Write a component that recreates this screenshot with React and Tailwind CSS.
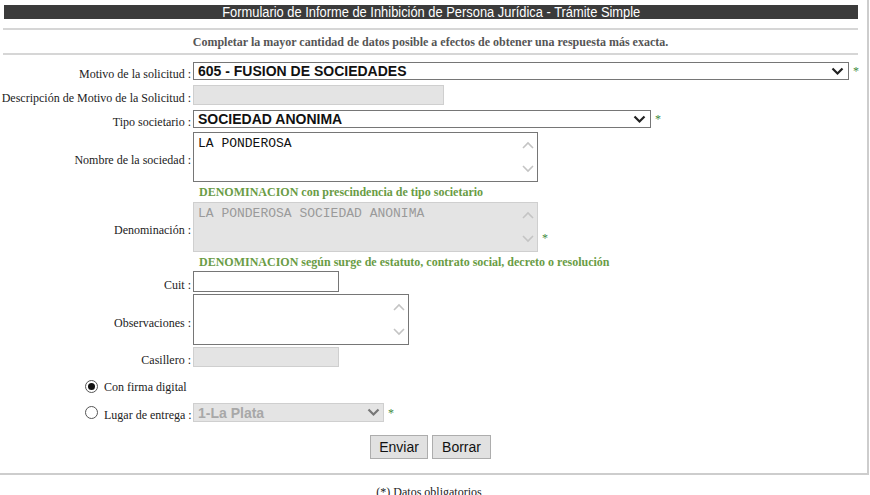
import React from "react";

const serif = "font-['Liberation_Serif','Times_New_Roman',serif]";
const sans = "font-['Liberation_Sans',Arial,sans-serif]";
const mono = "font-['Liberation_Mono','Courier_New',monospace]";

function Chevron({ color = "#222", w = 13 }) {
  return (
    <svg width={w} height="9" viewBox="0 0 13 9" className="shrink-0">
      <polyline points="1.5,1.5 6.5,6.5 11.5,1.5" fill="none" stroke={color} strokeWidth="2.2" />
    </svg>
  );
}

function Star() {
  return <span className={`${serif} text-[12px] text-[#3f8a3f] ml-[4px] leading-none`}>*</span>;
}

function ScrollArrows() {
  return (
    <div className="absolute right-[1px] top-[1px] bottom-[1px] w-[17px] flex flex-col justify-between items-center py-[7px]">
      <svg width="12" height="8" viewBox="0 0 12 8">
        <polyline points="1,7 6,2 11,7" fill="none" stroke="#c4c4c4" strokeWidth="1.6" />
      </svg>
      <svg width="12" height="8" viewBox="0 0 12 8">
        <polyline points="1,1 6,6 11,1" fill="none" stroke="#c4c4c4" strokeWidth="1.6" />
      </svg>
    </div>
  );
}

function Row({ label, children, className = "" }) {
  return (
    <div className={`flex items-center ${className}`}>
      <div className={`w-[191px] shrink-0 text-right ${serif} text-[12px] text-[#222] leading-none whitespace-nowrap translate-y-[3px]`}>
        {label}
      </div>
      <div className="ml-[2px] flex items-center">{children}</div>
    </div>
  );
}

function Radio({ checked }) {
  return (
    <span className="w-[13px] h-[13px] rounded-full border border-[#555] bg-white flex items-center justify-center shrink-0">
      {checked && <span className="w-[7px] h-[7px] rounded-full bg-[#111]" />}
    </span>
  );
}

export default function App() {
  return (
    <div className="w-[870px] h-[495px] overflow-hidden bg-white relative">
      <div className="w-[869px] h-[475px] border-r-2 border-b-2 border-[#cdcdcd] flex flex-col">
        <div className={`mt-[5px] ml-[4px] w-[854px] h-[14px] bg-[#3b3b3b] text-white flex items-center justify-center ${sans} text-[14px] leading-none overflow-hidden`}>
          <span className="inline-block scale-x-[0.92] whitespace-nowrap">
            Formulario de Informe de Inhibición de Persona Jurídica - Trámite Simple
          </span>
        </div>
        <div className="mt-[9px] ml-[3px] w-[855px] h-[2px] bg-[#d6d6d6]" />
        <div className={`h-[23px] flex items-center justify-center ${serif} text-[12px] font-bold text-[#555]`}>
          <span className="mr-[6px]">Completar la mayor cantidad de datos posible a efectos de obtener una respuesta más exacta.</span>
        </div>
        <div className="ml-[3px] w-[855px] h-[2px] bg-[#d6d6d6]" />

        <Row label="Motivo de la solicitud :" className="mt-[7px]">
          <div className={`w-[656px] h-[18px] border border-[#767676] bg-white flex items-center justify-between pl-[4px] pr-[4px] ${sans} text-[14px] font-bold text-[#111]`}>
            <span className="leading-none">605 - FUSION DE SOCIEDADES</span>
            <Chevron />
          </div>
          <Star />
        </Row>

        <Row label="Descripción de Motivo de la Solicitud :" className="mt-[5px]">
          <div className="w-[251px] h-[20px] border border-[#cfcfcf] bg-[#e4e4e4]" />
        </Row>

        <Row label="Tipo societario :" className="mt-[5px]">
          <div className={`w-[458px] h-[18px] border border-[#767676] bg-white flex items-center justify-between pl-[4px] pr-[4px] ${sans} text-[14px] font-bold text-[#111]`}>
            <span className="leading-none">SOCIEDAD ANONIMA</span>
            <Chevron />
          </div>
          <Star />
        </Row>

        <Row label="Nombre de la sociedad :" className="mt-[4px]">
          <div className={`relative w-[345px] h-[50px] border border-[#767676] bg-white pl-[4px] pt-[3px] ${mono} text-[13px] leading-[15px] text-[#111]`}>
            LA PONDEROSA
            <ScrollArrows />
          </div>
        </Row>

        <div className={`ml-[199px] mt-[2px] h-[16px] flex items-center ${serif} text-[12px] font-bold text-[#6a9c45] whitespace-nowrap`}>
          DENOMINACION con prescindencia de tipo societario
        </div>

        <Row label="Denominación :" className="mt-[2px]">
          <div className={`relative w-[345px] h-[50px] border border-[#cfcfcf] bg-[#e4e4e4] pl-[4px] pt-[3px] ${mono} text-[13px] leading-[15px] text-[#9a9a9a]`}>
            LA PONDEROSA SOCIEDAD ANONIMA
            <ScrollArrows />
          </div>
          <span className="self-end mb-[4px]"><Star /></span>
        </Row>

        <div className={`ml-[199px] mt-[2px] h-[16px] flex items-center ${serif} text-[12px] font-bold text-[#6a9c45] whitespace-nowrap`}>
          DENOMINACION según surge de estatuto, contrato social, decreto o resolución
        </div>

        <Row label="Cuit :" className="mt-[1px]">
          <div className="w-[146px] h-[21px] border border-[#767676] bg-white" />
        </Row>

        <Row label="Observaciones :" className="mt-[2px]">
          <div className="relative w-[216px] h-[51px] border border-[#767676] bg-white">
            <ScrollArrows />
          </div>
        </Row>

        <Row label="Casillero :" className="mt-[2px]">
          <div className="w-[146px] h-[20px] border border-[#cfcfcf] bg-[#e4e4e4]" />
        </Row>

        <div className={`mt-[13px] ml-[85px] flex items-center gap-[6px] ${serif} text-[12px] text-[#222] leading-none`}>
          <Radio checked />
          <span>Con firma digital</span>
        </div>

        <div className="mt-[10px] flex items-center">
          <div className={`w-[191px] shrink-0 flex items-center ${serif} text-[12px] text-[#222] leading-none whitespace-nowrap`}>
            <span className="ml-[85px] mr-[6px]"><Radio /></span>
            <span className="mt-[4px]">Lugar de entrega :</span>
          </div>
          <div className={`ml-[2px] w-[191px] h-[19px] border border-[#cfcfcf] bg-[#e4e4e4] flex items-center justify-between pl-[4px] pr-[3px] ${sans} text-[14px] font-bold text-[#a8a8a8]`}>
            <span className="leading-none">1-La Plata</span>
            <Chevron color="#777" />
          </div>
          <Star />
        </div>

        <div className={`mt-[13px] flex justify-center gap-[4px] ${sans} text-[14px] text-[#111]`}>
          <button className="ml-[0px] w-[58px] h-[24px] border border-[#adadad] bg-[#e1e1e1] leading-none">Enviar</button>
          <button className="mr-[6px] w-[59px] h-[24px] border border-[#adadad] bg-[#e1e1e1] leading-none">Borrar</button>
        </div>
      </div>
      <div className={`mt-[11px] w-[858px] text-center ${serif} text-[12px] text-[#222] leading-none`}>
        (*) Datos obligatorios
      </div>
    </div>
  );
}
